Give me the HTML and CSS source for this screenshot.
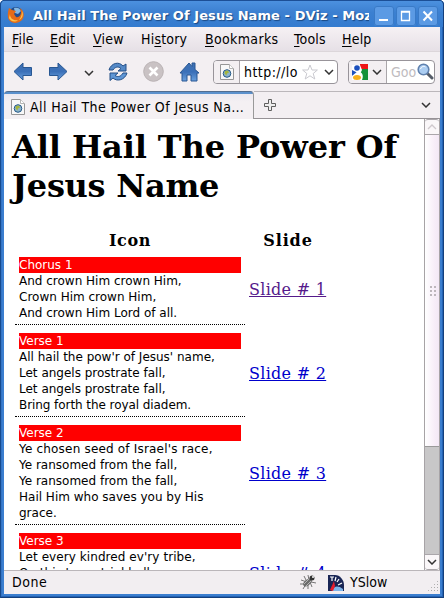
FILE: index.html
```html
<!DOCTYPE html>
<html lang="en">
<head>
<meta charset="utf-8">
<title>All Hail The Power Of Jesus Name - DViz</title>
<link rel="stylesheet" href="styles.css">
</head>
<body>
<svg class="defs" width="0" height="0">
  <defs>
    <linearGradient id="blue" x1="0" y1="0" x2="0" y2="1"><stop offset="0" stop-color="#3e70b2"/><stop offset=".5" stop-color="#3b70b8"/><stop offset="1" stop-color="#6ba1de"/></linearGradient>
    <symbol id="down" viewBox="0 0 10 6"><path d="M1 1l4 4 4-4" fill="none" stroke="currentColor" stroke-width="1.5"/></symbol>
    <symbol id="page" viewBox="0 0 14 16"><path d="M.5 .5h9l4 4v11H.5z" fill="#f8f8f8" stroke="#969696"/><path d="M9.5 .5v4h4" fill="#fff" stroke="#b5b5b5"/><circle cx="7" cy="9.500" r="3.800" fill="#8db4cb" stroke="#245888"/><path d="M5 7l3-.4 1 2-2 1-.5 2-2-2z" fill="#a5b63d"/></symbol>
  </defs>
</svg>
<div class="window">
  <header class="titlebar">
    <svg class="fox" width="18" height="18" viewBox="0 0 18 18"><circle cx="9" cy="8" r="7" fill="#214d8d"/><path d="M7 2c3-1 6 0 7 3l-3 3-3-1z" fill="#83b8e4"/><path d="M2 2l3 2 4 1-2 3 2 3c3 1 5-2 5-5l-1-4c4 3 5 8 2 12-4 4-10 4-13 0C0 11 1 5 2 2z" fill="#e56b17"/><path d="M3 8c0 5 4 7 8 6-3 3-8 1-9-2zM15 5c2 4 0 8-3 9 2-3 3-5 3-9z" fill="#ffc34b"/></svg>
    <span class="title">All Hail The Power Of Jesus Name - DViz - Moz</span>
    <div class="buttons">
      <span class="wb"><svg width="20" height="20"><path d="M5 14h9" stroke="#fff" stroke-width="2"/></svg></span>
      <span class="wb"><svg width="20" height="20"><path d="M5.500 5.500h8v9h-8zM5 6h9" fill="none" stroke="#fff" stroke-width="1.300"/></svg></span>
      <span class="wb"><svg width="20" height="20"><path d="M5.500 5.500l8.500 9M14 5.500l-8.500 9" stroke="#fff" stroke-width="2"/></svg></span>
    </div>
  </header>
  <nav class="menu">
    <span class="m-file"><u>F</u>ile</span><span class="m-edit"><u>E</u>dit</span><span class="m-view"><u>V</u>iew</span><span class="m-hist">Hi<u>s</u>tory</span><span class="m-book"><u>B</u>ookmarks</span><span class="m-tool"><u>T</u>ools</span><span class="m-help"><u>H</u>elp</span>
  </nav>
  <div class="toolbar">
    <svg class="i-back" width="20" height="19" viewBox="0 0 20 19"><path d="M1 9.500L10 1v4.500h8.500v8H10V18z" fill="url(#blue)" stroke="#285793"/></svg>
    <svg class="i-fwd" width="20" height="19" viewBox="0 0 20 19"><path d="M19 9.500L10 1v4.500H1.500v8H10V18z" fill="url(#blue)" stroke="#285793"/></svg>
    <svg class="i-drop" width="10" height="6"><use href="#down"/></svg>
    <svg class="i-reload" width="20" height="20" viewBox="0 0 20 20"><path d="M1 8C3 1 11-1 15 4l3-2v7h-8l3-2.500C10 4 7 5 5 8z" fill="#5589c7" stroke="#244f87"/><path d="M19 11c-2 7-10 9-14 5l-3 2.500V11h8l-3 2.500c3 2 6 1 8-2.500z" fill="#5f96d5" stroke="#244f87"/></svg>
    <svg class="i-stop" width="21" height="21" viewBox="0 0 21 21"><circle cx="10.500" cy="10.500" r="9.800" fill="#c9c2c4" stroke="#b9b2b4"/><path d="M6.500 6.500l8 8m0-8l-8 8" stroke="#fff" stroke-width="2.600"/></svg>
    <svg class="i-home" width="21" height="20" viewBox="0 0 21 20"><path d="M1 11l9-10 3 3.500V1h3v6.500l4 3.500h-2v8h-6v-6H8v6H3v-8z" fill="url(#blue)" stroke="#285793"/></svg>
    <div class="urlbox">
      <div class="favbox"><svg width="14" height="16"><use href="#page"/></svg></div>
      <span class="url">http://lo</span>
      <svg class="star" width="16" height="16" viewBox="0 0 16 16"><path d="M8 1l2 5h5.400l-4.200 3.500 1.600 5.500L8 11.800 3.200 15l1.600-5.500L.6 6H6z" fill="#fff" stroke="#c9c9cf"/></svg>
      <svg class="urldrop" width="10" height="6"><use href="#down"/></svg>
    </div>
    <div class="search">
      <div class="engine">
        <svg width="16" height="16" viewBox="0 0 16 16"><path d="M8 0h8v5H8z" fill="#ee1515"/><path d="M8 5h8v11H8z" fill="#14913a"/><path d="M0 1h8l2 5-2 4H0z" fill="#fff"/><circle cx="5" cy="4" r="2.800" fill="#1c50bd"/><path d="M0 6l6 3-6 3z" fill="#1c50bd"/><path d="M6 7c4 1 6 4 4 9H0v-4z" fill="#fff"/><ellipse cx="5" cy="13.500" rx="4" ry="2.500" fill="#f6b01b"/></svg>
        <svg width="10" height="6"><use href="#down"/></svg>
      </div>
      <span class="hint">Goo</span>
      <svg class="lens" width="17" height="17" viewBox="0 0 17 17"><path d="M10 10l5 5" stroke="#555c68" stroke-width="3" stroke-linecap="round"/><circle cx="6.500" cy="6.500" r="5.300" fill="#abcdf2" stroke="#6081ae" stroke-width="1.600"/><path d="M3.500 6c1-3 4-3 5-2" stroke="#fff" fill="none"/></svg>
    </div>
  </div>
  <div class="tabs">
    <div class="tab"><svg width="14" height="16"><use href="#page"/></svg><span>All Hail The Power Of Jesus Na…</span></div>
    <div class="tabrest">
      <svg width="13" height="13"><path d="M4.500 .5h3v4h4v3h-4v4h-3v-4h-4v-3h4z" fill="#eee" stroke="#5f5f5f"/></svg>
      <svg width="10" height="6"><use href="#down"/></svg>
    </div>
  </div>
  <div class="viewport">
    <main class="doc">
      <h1>All Hail The Power Of<br><span class="h1b">Jesus Name</span></h1>
      <div class="row head"><b>Icon</b><b class="sl">Slide</b></div>
      <div class="row">
        <div class="verse"><h2>Chorus 1</h2>And crown Him crown Him,<br>Crown Him crown Him,<br>And crown Him Lord of all.</div>
        <a class="visited" href="#1">Slide # 1</a>
      </div>
      <div class="row">
        <div class="verse"><h2>Verse 1</h2>All hail the pow'r of Jesus' name,<br>Let angels prostrate fall,<br>Let angels prostrate fall,<br><span class="tight">Bring forth the royal diadem.</span></div>
        <a href="#2">Slide # 2</a>
      </div>
      <div class="row">
        <div class="verse"><h2>Verse 2</h2><span class="wide">Ye chosen seed of Israel's race,</span><br>Ye ransomed from the fall,<br>Ye ransomed from the fall,<br>Hail Him who saves you by His<br>grace.</div>
        <a href="#3">Slide # 3</a>
      </div>
      <div class="row">
        <div class="verse"><h2>Verse 3</h2><span class="loose">Let every kindred ev'ry tribe,</span><br>On this terrestrial ball,<br>To Him all majesty ascribe,<br>And crown Him Lord of all.</div>
        <a href="#4">Slide # 4</a>
      </div>
    </main>
    <div class="scroll">
      <div class="sbtn up"><svg width="10" height="6"><path d="M1 5l4-4 4 4" fill="none" stroke="#cfc9cd" stroke-width="1.300"/></svg></div>
      <div class="thumb"><i class="grip"></i></div>
      <div class="track"></div>
      <div class="sbtn dn"><svg width="10" height="6"><use href="#down"/></svg></div>
    </div>
  </div>
  <footer class="status">
    <span class="done">Done</span>
    <svg class="bug" width="17" height="16" viewBox="0 0 17 16"><path d="M4 2l3 6M8 1l1 5M1 6l6 2M0 10h6M3 15l3-5M8 15V9M12 13l-2-5M11 8l5 1" stroke="#555" fill="none" stroke-width=".8"/><ellipse cx="7.500" cy="8.500" rx="5" ry="2.800" transform="rotate(-40 7.500 8.500)" fill="#6d6d6d"/><path d="M4 10l5-5M6 12l5-5" stroke="#b5b5b5"/><circle cx="12" cy="4" r="2.500" fill="#333"/><circle cx="13" cy="3" r="1" fill="#fff"/></svg>
    <svg class="gauge" width="16" height="16" viewBox="0 0 16 16"><path d="M0 0h7c5 0 9 5 9 10v6H0z" fill="#192555"/><path d="M2 2h4M4 2v4M8 2l-1 4M11 4L9 7M14 8l-4 2" stroke="#fff" stroke-width="1.200"/><path d="M4 15c2-4 6-5 11-1v2H4z" fill="#7eb4e9"/><path d="M2 15L6 6l1 5-2 5z" fill="#e51d2c"/></svg>
    <span class="yslow">YSlow</span>
    <i class="resize"></i>
  </footer>
</div>
</body>
</html>
```
FILE: styles.css
```css
* { box-sizing: border-box; }
body { margin: 0; overflow: hidden; font-family: "DejaVu Sans", sans-serif; color: #000; }
svg { display: block; flex: none; }
.defs { position: absolute; }
.window {
  width: 444px; height: 598px; padding: 0 4px 4px;
  display: flex; flex-direction: column;
  background: #3b7ecf; border-radius: 5px 5px 0 0;
  box-shadow: inset 1px 0 #174a8e, inset -1px 0 #143f7c, inset 0 -1px #143f7c, inset 0 1px #174a8e, inset -2px -2px #2463b4, inset 2px 0 #3474c4;
}
.titlebar { height: 27px; flex: none; display: flex; align-items: center; padding: 2px 2px 0 3px; background: linear-gradient(#1c4f96 0 1px, #4c91df 1px, #3c80d1 12px, #347bcf); margin: 0 -3px; border-radius: 5px 5px 0 0; }
.fox { margin-left: 3px; }
.title { flex: none; width: 336px; margin-left: 8px; overflow: hidden; white-space: nowrap; font: bold 13px/20px "DejaVu Sans", sans-serif; letter-spacing: .08px; color: #fff; text-shadow: 1px 1px 1px #194781; margin-top: 2px; }
.buttons { display: flex; gap: 2px; margin: 2px 0 0 5px; }
.wb { width: 20px; height: 20px; border-radius: 3px; background: #5b9ae4; box-shadow: inset 0 0 0 1px #397ac7; }
.menu { height: 25px; flex: none; display: flex; background: linear-gradient(#f6f1f4, #e6e0e6); border-bottom: 1px solid #dcd6da; padding-left: 8px; font: 14px/24px "DejaVu Sans Condensed", "DejaVu Sans", sans-serif; font-stretch: condensed; white-space: nowrap; letter-spacing: .2px; }
.menu u { text-underline-offset: 2px; text-decoration-thickness: 1px; }
.menu span { flex: none; }
.m-file { width: 38px; }
.m-edit { width: 43px; }
.m-view { width: 48px; }
.m-hist { width: 64px; }
.m-book { width: 89px; letter-spacing: .35px; }
.m-tool { width: 48px; }
.toolbar { height: 39px; flex: none; display: flex; align-items: center; background: #f3eff2; color: #333; padding: 0 5px 0 9px; }
.i-fwd { margin-left: 15px; }
.i-drop { margin: 2px 0 0 16px; }
.i-reload { margin-left: 14px; }
.i-stop { margin-left: 15px; }
.i-home { margin-left: 15px; }
.urlbox { width: 125px; flex: none; height: 24px; display: flex; align-items: center; margin-left: 13px; border: 1px solid #98949a; border-radius: 4px; background: #fff; overflow: hidden; }
.favbox { width: 26px; height: 22px; flex: none; display: grid; place-items: center; background: #f3eff2; border-right: 1px solid #aaa6aa; }
.url { width: 58px; flex: none; margin-left: 4px; font: 14px/20px "DejaVu Sans Condensed", "DejaVu Sans", sans-serif; font-stretch: condensed; letter-spacing: .45px; color: #000; }
.urldrop { margin-left: 6px; }
.search { width: 87px; flex: none; height: 24px; display: flex; align-items: center; margin-left: 10px; border: 1px solid #98949a; border-radius: 4px; background: #fff; overflow: hidden; }
.engine { width: 38px; height: 22px; flex: none; display: flex; align-items: center; gap: 4px; padding-left: 3px; background: #f3eff2; border-right: 1px solid #aaa6aa; }
.hint { width: 26px; flex: none; margin-left: 4px; font: 14px/20px "DejaVu Sans Condensed", "DejaVu Sans", sans-serif; font-stretch: condensed; color: #bebbbe; }
.tabs { height: 28px; flex: none; display: flex; background: #f3eff2; }
.tab { width: 250px; flex: none; display: flex; align-items: center; padding: 2px 0 0 7px; border: 1px solid #999; border-width: 1px 1px 0 0; border-top-color: #526d8f; border-radius: 4px 4px 0 0; background: linear-gradient(#5b91cd 0 2px, #ece9f0 2px, #f4f0f3 10px); font: 14px/20px "DejaVu Sans Condensed", "DejaVu Sans", sans-serif; font-stretch: condensed; letter-spacing: .4px; white-space: nowrap; }
.tab span { margin-left: 5px; }
.tabrest { flex: 1; display: flex; justify-content: space-between; align-items: center; padding: 0 9px 0 10px; border-top: 1px solid #bbb7bb; border-bottom: 1px solid #969296; color: #333; }
.viewport { flex: 1; min-height: 0; display: flex; background: #fff; overflow: hidden; }
.doc { width: 420px; flex: none; padding: 9px 8px 0; height: 451px; overflow: hidden; }
h1 { margin: 0; font: bold 32px/39px "DejaVu Serif", serif; letter-spacing: -.1px; white-space: nowrap; }
.h1b { letter-spacing: -.3px; }
.row { display: flex; align-items: center; margin: 0 0 4px 3px; }
.head { height: 25px; margin: 22px 0 0 3px; font: bold 16px/20px "DejaVu Serif", serif; letter-spacing: .6px; }
.head b { width: 230px; text-align: center; }
.head .sl { width: 78px; margin-left: 4px; letter-spacing: .9px; }
.verse { width: 230px; flex: none; padding: 4px 4px 3px; border-bottom: 1px dotted #000; font-size: 12px; line-height: 16px; white-space: nowrap; }
.tight { letter-spacing: -.07px; }
.wide { letter-spacing: .19px; }
.loose { letter-spacing: .07px; }
h2 { margin: 0; font: 12px/16px "DejaVu Sans", sans-serif; background: #f00; color: #fff; }
a { margin: 2px 0 0 4px; font: 16px/20px "DejaVu Serif", serif; letter-spacing: .28px; color: #00c; text-decoration: underline; text-decoration-thickness: 1px; white-space: nowrap; }
a.visited { color: #551a8b; }
.scroll { width: 16px; display: flex; flex-direction: column; border: 1px solid #a7a3a6; border-width: 0 1px 0 1px; }
.sbtn { height: 16px; flex: none; display: grid; place-items: center; background: #faf7f9; border: 1px solid #aaa6aa; border-width: 1px 0; border-radius: 3px 3px 0 0; color: #333; }
.sbtn.dn { border-radius: 0 0 3px 3px; }
.thumb { height: 311px; display: grid; place-items: center; background: linear-gradient(90deg, #fff, #f7edf8 70%, #f3e8f5); }
.grip { width: 7px; height: 11px; background: radial-gradient(circle, #bdb6bc 1px, transparent 1.300px) 0 0 / 4px 4px; }
.track { flex: 1; background: #c8c7c8; border-top: 1px solid #999; }
.status { height: 24px; flex: none; display: flex; align-items: center; padding-bottom: 2px; background: #f2eef1; border-top: 1px solid #bbb6ba; font: 14px/20px "DejaVu Sans Condensed", "DejaVu Sans", sans-serif; font-stretch: condensed; }
.done { width: 287px; padding-left: 8px; letter-spacing: .5px; }
.bug { margin-left: 9px; }
.gauge { margin: 2px 0 0 11px; }
.yslow { margin-left: 6px; flex: 1; }
.resize { width: 12px; height: 12px; margin: 8px 1px 0 0; background: radial-gradient(circle, #aaa 0 .8px, transparent 1px) 0 0 / 3px 3px; clip-path: polygon(100% 0, 100% 100%, 0 100%); }
```
